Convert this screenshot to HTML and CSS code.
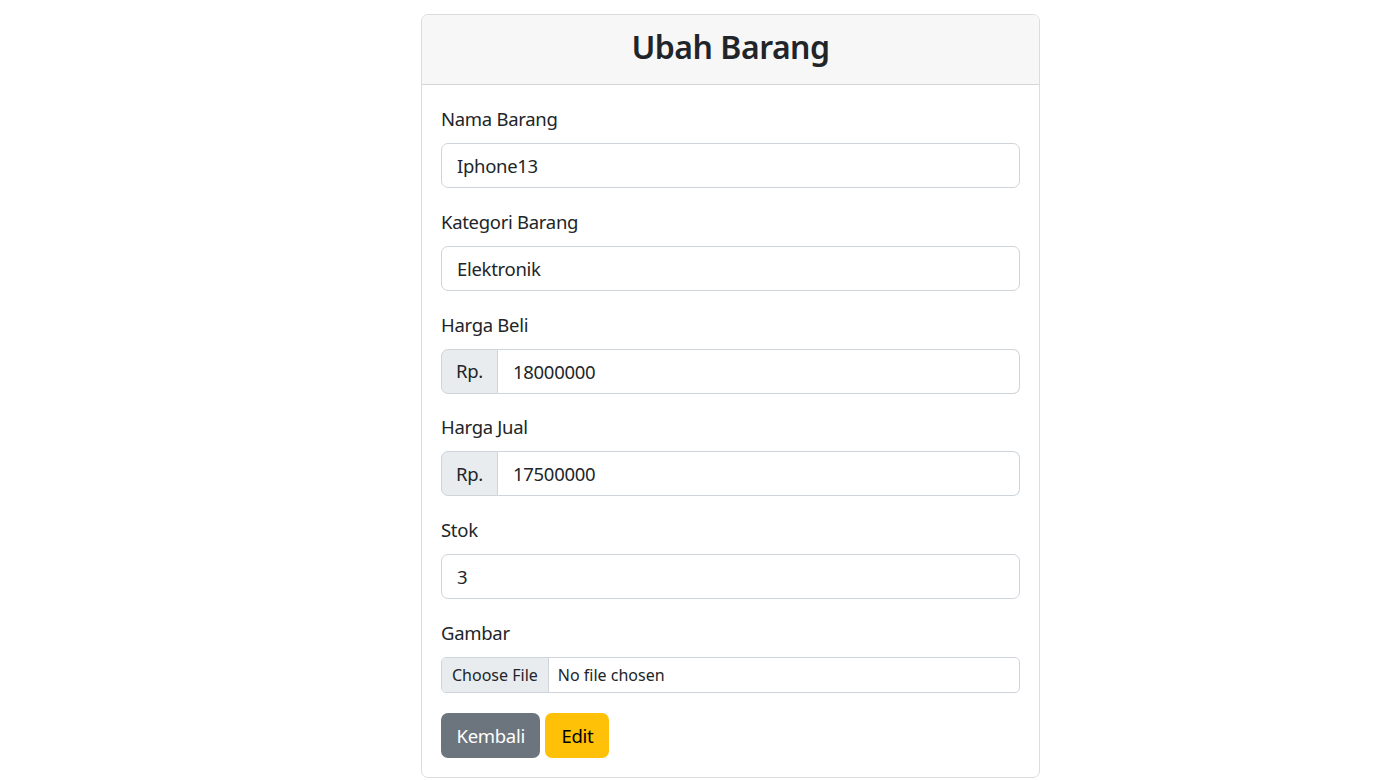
FILE: index.html
```html
<!DOCTYPE html>
<html lang="id">
<head>
<meta charset="utf-8">
<title>Ubah Barang</title>
<link rel="stylesheet" href="styles.css">
</head>
<body>
<div class="card">
  <div class="card-header"><h2 class="title">Ubah Barang</h2></div>
  <form class="card-body">
    <div class="field">
      <label class="label">Nama Barang</label>
      <div class="control">Iphone13</div>
    </div>
    <div class="field">
      <label class="label">Kategori Barang</label>
      <div class="control">Elektronik</div>
    </div>
    <div class="field">
      <label class="label">Harga Beli</label>
      <div class="group"><span class="addon">Rp.</span><span class="control grouped">18000000</span></div>
    </div>
    <div class="field">
      <label class="label">Harga Jual</label>
      <div class="group"><span class="addon">Rp.</span><span class="control grouped">17500000</span></div>
    </div>
    <div class="field">
      <label class="label">Stok</label>
      <div class="control">3</div>
    </div>
    <div class="field last">
      <label class="label">Gambar</label>
      <div class="file"><span class="file-btn">Choose File</span><span class="file-name">No file chosen</span></div>
    </div>
    <div class="actions">
      <span class="btn btn-secondary">Kembali</span>
      <span class="btn btn-warning">Edit</span>
    </div>
  </form>
</div>
</body>
</html>
```
FILE: styles.css
```css
* { box-sizing: border-box; }
body {
  margin: 0;
  background: #fff;
  color: #212529;
  font-family: "Noto Sans", "Open Sans", sans-serif;
  font-size: 18.5px;
  letter-spacing: -0.3px;
  line-height: 1.5;
}
.card {
  width: 619px;
  margin: 14px 0 0 421px;
  border: 1px solid #dcdcdc;
  border-radius: 7px;
  overflow: hidden;
}
.card-header {
  background: #f7f7f7;
  border-bottom: 1px solid #d6d6d6;
  height: 70px;
  display: flex;
  align-items: center;
  justify-content: center;
}
.title {
  margin: 0;
  font-size: 32px;
  font-weight: 600;
  letter-spacing: -0.5px;
  line-height: 1.2;
  padding-bottom: 4px;
}
.card-body {
  display: block;
  padding: 20px 19px 19px;
}
.field { margin-bottom: 19.8px; }
.field.last { margin-bottom: 20.5px; }
.label {
  display: block;
  margin-bottom: 9.5px;
  line-height: 28.5px;
}
.control {
  display: block;
  height: 45px;
  padding: 7px 15px;
  border: 1px solid #ced4da;
  border-radius: 7px;
  line-height: 29px;
  background: #fff;
}
.group {
  display: flex;
  height: 45px;
}
.addon {
  flex: 0 0 57px;
  background: #e9ecef;
  border: 1px solid #ced4da;
  border-radius: 7px 0 0 7px;
  display: flex;
  align-items: center;
  justify-content: center;
}
.control.grouped {
  flex: 1;
  height: 45px;
  border-left: none;
  border-radius: 0 7px 7px 0;
}
.file {
  display: flex;
  height: 36px;
  border: 1px solid #ced4da;
  border-radius: 5px;
  overflow: hidden;
  font-size: 16px;
  letter-spacing: 0;
  line-height: 34px;
}
.file-btn {
  background: #e9ecef;
  border-right: 1px solid #ced4da;
  padding: 0 10px;
}
.file-name { padding: 0 9px; }
.actions {
  display: flex;
  gap: 5px;
}
.btn {
  display: inline-block;
  height: 45px;
  padding: 0 15.5px;
  border-radius: 7px;
  line-height: 46px;
}
.btn-secondary { background: #6c757d; color: #fff; }
.btn-warning { background: #ffc107; color: #000; padding: 0 16px; }
```
